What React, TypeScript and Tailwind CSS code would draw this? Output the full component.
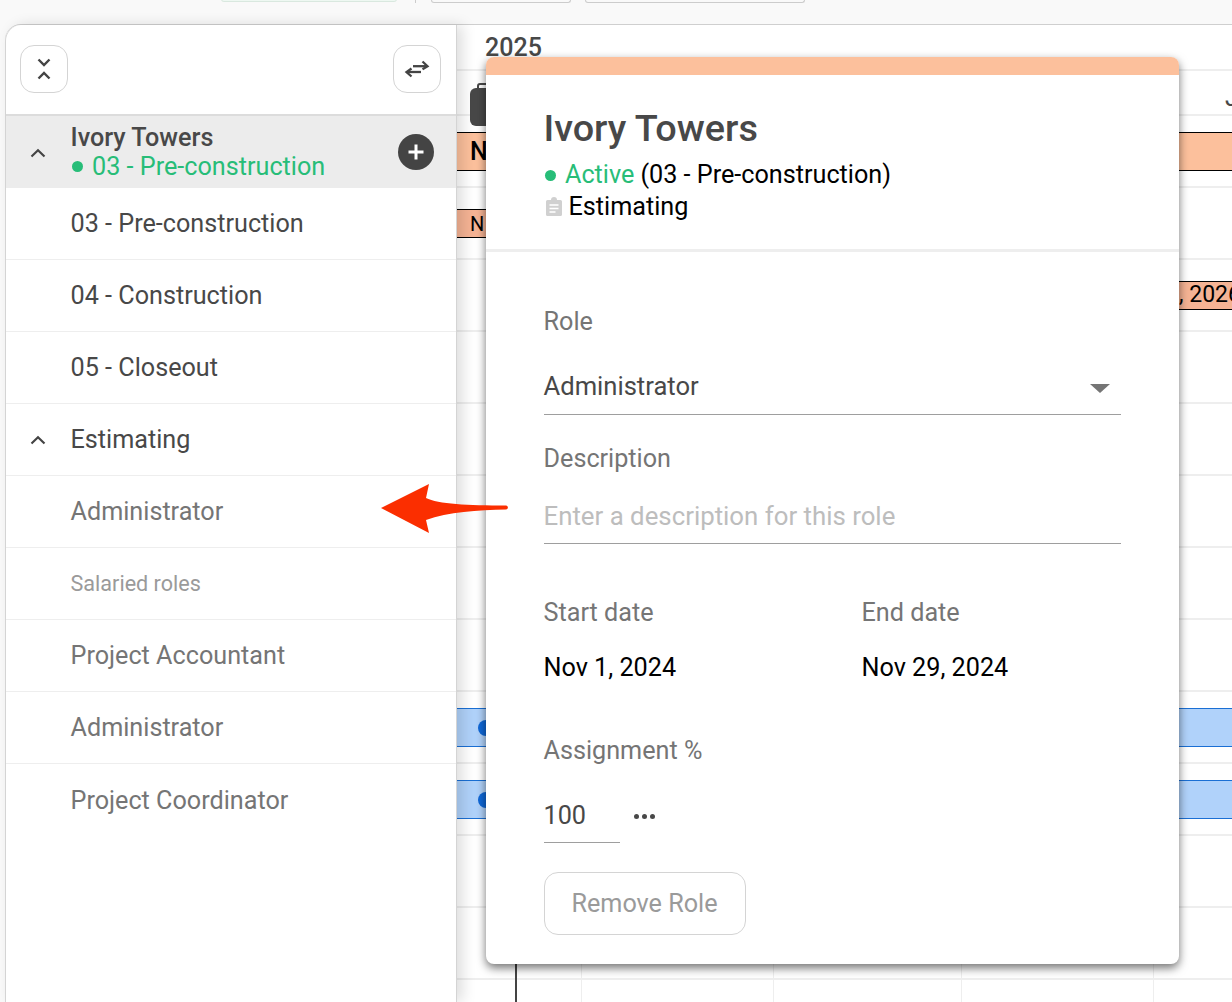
import React from "react";

const Chevron = ({ cls = "" }: { cls?: string }) => (
  <svg width="18" height="12" viewBox="0 0 18 12" className={cls} fill="none" stroke="#444" strokeWidth="2.2">
    <path d="M2.5 9.5 9 3.2l6.5 6.3" />
  </svg>
);

const SideRow = ({ label, muted, small, chevron }: { label: string; muted?: boolean; small?: boolean; chevron?: boolean }) => (
  <div className="h-[72px] shrink-0 border-b border-[#eeeeee] flex items-center pl-[64.5px] relative">
    {chevron && <Chevron cls="absolute left-[23px] top-[30px]" />}
    <span className={`${small ? "text-[21.6px] text-[#9a9a9a]" : muted ? "text-[25.2px] text-[#757575]" : "text-[25.2px] text-[#484848]"} leading-none mt-px`}>{label}</span>
  </div>
);

const TimeRow = ({ children }: { children?: React.ReactNode }) => (
  <div className="h-[72px] shrink-0 border-b-2 border-[#eeeeee] relative">{children}</div>
);

const BlueBar = () => (
  <div className="absolute left-0 right-0 top-[16px] h-[39px] bg-[#b0d2fa] border-y border-[#1a6fd4] flex items-center pl-[21px]">
    <span className="w-[16px] h-[16px] rounded-full bg-[#0f68d8]" />
  </div>
);

export default function App() {
  return (
    <div className="w-[1232px] h-[1002px] overflow-hidden relative bg-[#f9f9f9] [font-family:Roboto,sans-serif]">
      <div className="h-[24px] flex items-start relative">
        <div className="ml-[221px] w-[176px] h-[3px] -mt-px border border-[#d9e8df] rounded-b-lg bg-[#eef8f2]" />
        <div className="ml-[18px] w-px h-[3px] bg-[#cccccc]" />
        <div className="ml-[15px] w-[140px] h-[3px] border-b border-x border-[#cccccc] rounded-b-lg" />
        <div className="ml-[14px] w-[220px] h-[3px] border-b border-x border-[#cccccc] rounded-b-lg" />
      </div>

      <div className="flex h-[978px] border-t border-[#cfcfcf] ml-[5px] bg-white rounded-tl-2xl">
        {/* Sidebar */}
        <div className="w-[452px] shrink-0 border-l border-r border-[#d4d4d4] rounded-tl-2xl bg-white flex flex-col relative z-10 shadow-[6px_0_14px_rgba(0,0,0,0.13)]">
          <div className="h-[91px] shrink-0 flex items-start justify-between pl-[14px] pr-[15px] pt-[20px] border-b-2 border-[#dcdcdc]">
            <button className="w-[48px] h-[48px] rounded-[14px] border border-[#d4d4d4] flex items-center justify-center bg-white">
              <svg width="18" height="26" viewBox="0 0 18 26" fill="none" stroke="#444" strokeWidth="2.4">
                <path d="M3.5 3.5 9 9l5.500-5.500" />
                <path d="M3.500 22.500 9 17l5.500 5.500" />
              </svg>
            </button>
            <button className="w-[48px] h-[48px] rounded-[14px] border border-[#d4d4d4] flex items-center justify-center bg-white">
              <svg width="26" height="20" viewBox="0 0 26 20" fill="none" stroke="#444" strokeWidth="2.300">
                <path d="M9 7.200h13.500" />
                <path d="m18.500 2.500 5 4.700-5 3" />
                <path d="M17 13H3.500" />
                <path d="m7.500 9.500-5 3.500 5 4.500" />
              </svg>
            </button>
          </div>
          <div className="h-[72px] shrink-0 bg-[#ececec] relative pl-[64.5px] pt-[8px]">
            <Chevron cls="absolute left-[23px] top-[31px]" />
            <div className="text-[25.2px] leading-[28px] font-medium text-[#484848]">Ivory Towers</div>
            <div className="text-[25.2px] leading-[29px] text-[#27bd78] flex items-center">
              <span className="w-[11px] h-[11px] rounded-full bg-[#27bd78] ml-[1.5px] mr-[9px]" />
              03 - Pre-construction
            </div>
            <div className="absolute left-[392px] top-[18px] w-[36px] h-[36px] rounded-full bg-[#444444] flex items-center justify-center">
              <svg width="20" height="20" viewBox="0 0 20 20" stroke="#fff" strokeWidth="3">
                <path d="M10 2.500v15M2.500 10h15" />
              </svg>
            </div>
          </div>
          <SideRow label="03 - Pre-construction" />
          <SideRow label="04 - Construction" />
          <SideRow label="05 - Closeout" />
          <SideRow label="Estimating" chevron />
          <SideRow label="Administrator" muted />
          <SideRow label="Salaried roles" small />
          <SideRow label="Project Accountant" muted />
          <SideRow label="Administrator" muted />
          <div className="h-[72px] shrink-0 flex items-center pl-[64.5px]">
            <span className="text-[25.2px] leading-none text-[#757575] mt-px">Project Coordinator</span>
          </div>
        </div>

        {/* Timeline */}
        <div className="flex-1 min-w-0 flex flex-col relative bg-white">
          <div className="h-[46px] shrink-0 border-b-2 border-[#eeeeee] pl-[28px] pt-[8px] text-[25px] leading-[29px] font-medium text-[#484848]">2025</div>
          <div className="h-[45px] shrink-0 border-b-2 border-[#eeeeee] relative">
            <div className="absolute left-[20px] top-[12px] w-[16px] h-[10px] rounded-t-[3px] border-2 border-[#484848]" />
            <div className="absolute left-[13px] top-[17px] w-[24px] h-[38px] rounded-[6px] bg-[#484848] z-[1]" />
            <span className="absolute left-[768px] top-[12px] text-[25px] leading-[29px] text-[#484848]">J</span>
          </div>
          <TimeRow>
            <div className="absolute left-0 right-0 top-[16px] h-[39px] bg-[#fcc09c] border-y border-black pl-[13px] flex items-center text-[25px] font-medium text-black">N</div>
          </TimeRow>
          <TimeRow>
            <div className="absolute left-0 w-[40px] top-[21px] h-[29px] bg-[#f5b394] border-y border-black pl-[13px] flex items-center text-[20px] text-black">N</div>
          </TimeRow>
          <TimeRow>
            <div className="absolute left-[700px] right-0 top-[21px] h-[29px] bg-[#f5b394] border-y border-black pl-[22px] flex items-center text-[23px] text-black whitespace-nowrap">, 2026</div>
          </TimeRow>
          <TimeRow />
          <TimeRow />
          <TimeRow />
          <TimeRow />
          <TimeRow />
          <TimeRow>
            <BlueBar />
          </TimeRow>
          <TimeRow>
            <BlueBar />
          </TimeRow>
          <TimeRow />
          <TimeRow />
          <div className="absolute left-[124px] top-[810px] bottom-0 w-px bg-[#eeeeee]" />
          <div className="absolute left-[316px] top-[810px] bottom-0 w-px bg-[#eeeeee]" />
          <div className="absolute left-[504px] top-[810px] bottom-0 w-px bg-[#eeeeee]" />
          <div className="absolute left-[696px] top-[810px] bottom-0 w-px bg-[#eeeeee]" />
          <div className="absolute left-[58px] top-[810px] bottom-0 w-[2px] bg-[#444444]" />
        </div>
      </div>

      {/* Popover */}
      <div className="absolute left-[485.5px] top-[57px] w-[693px] h-[907px] bg-white rounded-[8px] overflow-hidden z-20 shadow-[0_4px_10px_rgba(0,0,0,0.55)] flex flex-col">
        <div className="h-[18px] shrink-0 bg-[#fcc09c]" />
        <div className="h-[177px] shrink-0 border-b-[3px] border-[#eeeeee] pl-[58px] pt-[31px]">
          <div className="text-[37.8px] leading-[44px] font-medium text-[#484848]">Ivory Towers</div>
          <div className="mt-[9px] text-[25.2px] leading-[32px] flex items-center text-black">
            <span className="w-[11px] h-[11px] rounded-full bg-[#27bd78] ml-[1.5px] mr-[9px]" />
            <span className="text-[#27bd78]">Active</span>
            <span className="ml-[6px]">(03 - Pre-construction)</span>
          </div>
          <div className="text-[25.2px] leading-[32px] flex items-center text-black">
            <svg width="18" height="20" viewBox="0 0 18 20" className="mr-[6px] ml-px">
              <path d="M2.500 3H6a3 3 0 0 1 6 0h3.500A1.500 1.500 0 0 1 17 4.500v13a1.500 1.500 0 0 1-1.500 1.500h-13A1.500 1.500 0 0 1 1 17.500v-13A1.500 1.500 0 0 1 2.500 3Z" fill="#d0d0d0" />
              <path d="M4.500 8h9M4.500 11.500h9M4.500 15h6" stroke="#fff" strokeWidth="1.500" />
            </svg>
            Estimating
          </div>
        </div>
        <div className="pl-[58px] pr-[58px] flex flex-col">
          <div className="mt-[55px] text-[25.2px] leading-[30px] text-[#757575]">Role</div>
          <div className="mt-[30px] h-[48px] border-b border-[#9e9e9e] flex items-start justify-between text-[25.6px] leading-[30px] text-[#484848] pt-[4px]">
            <span>Administrator</span>
            <span className="w-0 h-0 border-x-[10px] border-x-transparent border-t-[9px] border-t-[#757575] mr-[11px] mt-[13px]" />
          </div>
          <div className="mt-[29px] text-[25.2px] leading-[30px] text-[#757575]">Description</div>
          <div className="mt-[28px] h-[42px] border-b border-[#9e9e9e] text-[25.8px] leading-[28px] text-[#bdbdbd]">Enter a description for this role</div>
          <div className="mt-[54px] flex text-[25.2px] leading-[30px] text-[#757575]">
            <div className="w-[318px]">Start date</div>
            <div>End date</div>
          </div>
          <div className="mt-[25px] flex text-[25.2px] leading-[30px] text-black">
            <div className="w-[318px]">Nov 1, 2024</div>
            <div>Nov 29, 2024</div>
          </div>
          <div className="mt-[53px] text-[25.2px] leading-[30px] text-[#757575]">Assignment %</div>
          <div className="mt-[35px] flex items-start">
            <div className="w-[76px] h-[42px] border-b border-[#9e9e9e] text-[25.2px] leading-[30px] text-[#484848]">100</div>
            <div className="ml-[14px] mt-[13px] flex gap-[3px]">
              <span className="w-[5px] h-[5px] rounded-full bg-[#484848]" />
              <span className="w-[5px] h-[5px] rounded-full bg-[#484848]" />
              <span className="w-[5px] h-[5px] rounded-full bg-[#484848]" />
            </div>
          </div>
          <button className="mt-[29px] w-[202px] h-[63px] rounded-[14px] border border-[#d4d4d4] text-[25.2px] text-[#9a9a9a] bg-white">Remove Role</button>
        </div>
      </div>

      {/* Annotation arrow */}
      <svg className="absolute left-[377px] top-[482px] z-30" width="134" height="54" viewBox="0 0 134 54">
        <path d="M4 26 52 2 49 16C61 22 91 23.500 129 23.500c2.500.2 2.500 3.800 0 4C101 28 71 30 49 38l3 13Z" fill="#fb2e00" />
      </svg>
    </div>
  );
}
